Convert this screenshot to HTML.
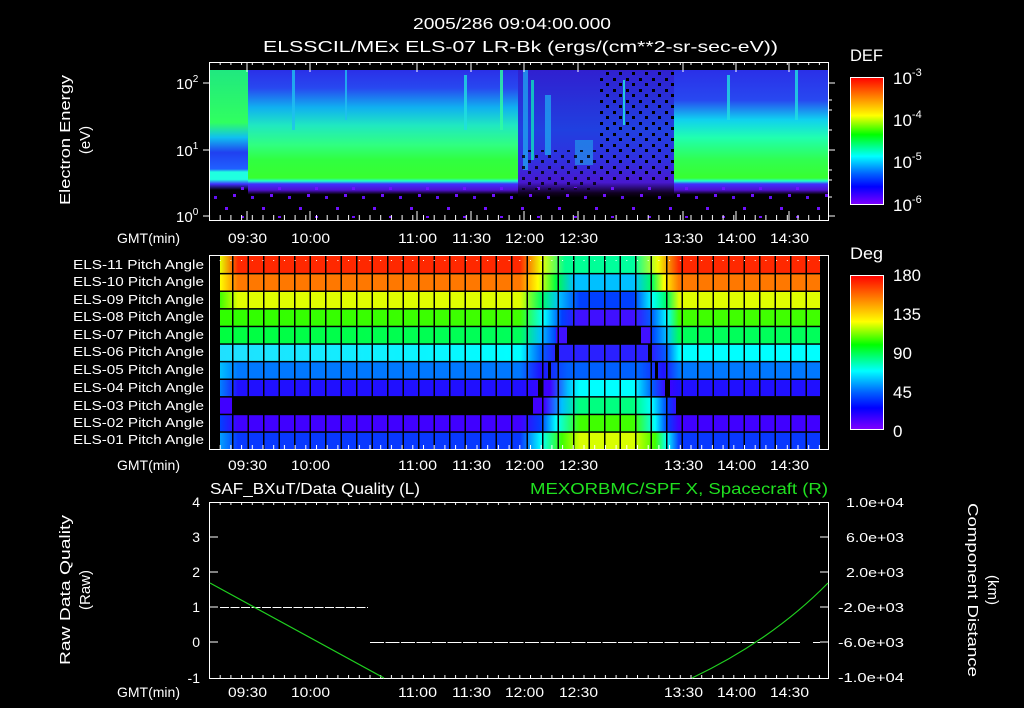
<!DOCTYPE html>
<html><head><meta charset="utf-8"><style>
html,body{margin:0;padding:0;background:#000;}
svg{display:block}
text{font-family:"Liberation Sans",sans-serif;fill:#fff}
</style></head><body>
<svg width="1024" height="708" viewBox="0 0 1024 708" xmlns="http://www.w3.org/2000/svg">
<defs>
<linearGradient id="cb" x1="0" y1="0" x2="0" y2="1">
<stop offset="0" stop-color="#ff0000"/><stop offset="0.15" stop-color="#ff8000"/><stop offset="0.3" stop-color="#ffff00"/><stop offset="0.45" stop-color="#00ff00"/><stop offset="0.62" stop-color="#00ffff"/><stop offset="0.76" stop-color="#0060ff"/><stop offset="0.86" stop-color="#0000ff"/><stop offset="1" stop-color="#8000ff"/>
</linearGradient>
<linearGradient id="specL" gradientUnits="userSpaceOnUse" x1="0" y1="70" x2="0" y2="220">
<stop offset="0" stop-color="#2a30e8"/><stop offset="0.12" stop-color="#2848f0"/><stop offset="0.25" stop-color="#10b0f0"/><stop offset="0.37" stop-color="#20e8c0"/><stop offset="0.5" stop-color="#30ff80"/><stop offset="0.6" stop-color="#30ff40"/><stop offset="0.72" stop-color="#38ff30"/><stop offset="0.74" stop-color="#20ffd0"/><stop offset="0.76" stop-color="#4030ff"/><stop offset="0.8" stop-color="#5010d0"/><stop offset="0.83" stop-color="#000"/><stop offset="1" stop-color="#000"/>
</linearGradient>
<linearGradient id="specR" gradientUnits="userSpaceOnUse" x1="0" y1="70" x2="0" y2="220">
<stop offset="0" stop-color="#2a30e8"/><stop offset="0.2" stop-color="#2848f0"/><stop offset="0.33" stop-color="#10d0f0"/><stop offset="0.45" stop-color="#20ffb0"/><stop offset="0.6" stop-color="#30ff50"/><stop offset="0.72" stop-color="#38ff30"/><stop offset="0.74" stop-color="#20ffd0"/><stop offset="0.76" stop-color="#4030ff"/><stop offset="0.8" stop-color="#5010d0"/><stop offset="0.83" stop-color="#000"/><stop offset="1" stop-color="#000"/>
</linearGradient>
<linearGradient id="specM" gradientUnits="userSpaceOnUse" x1="0" y1="70" x2="0" y2="220">
<stop offset="0" stop-color="#3020d0"/><stop offset="0.4" stop-color="#2040e0"/><stop offset="0.6" stop-color="#3030e0"/><stop offset="0.75" stop-color="#4818d0"/><stop offset="0.82" stop-color="#100020"/><stop offset="0.85" stop-color="#000"/><stop offset="1" stop-color="#000"/>
</linearGradient>
<linearGradient id="specE" gradientUnits="userSpaceOnUse" x1="0" y1="70" x2="0" y2="220">
<stop offset="0" stop-color="#20e880"/><stop offset="0.35" stop-color="#30ff60"/><stop offset="0.45" stop-color="#10c0f0"/><stop offset="0.55" stop-color="#2040f0"/><stop offset="0.66" stop-color="#2060ff"/><stop offset="0.68" stop-color="#20ffe0"/><stop offset="0.73" stop-color="#20ffe0"/><stop offset="0.76" stop-color="#4030ff"/><stop offset="0.8" stop-color="#000"/><stop offset="1" stop-color="#000"/>
</linearGradient>
<pattern id="tk" patternUnits="userSpaceOnUse" x="209" y="0" width="10.7" height="10"><rect x="0" y="0" width="1" height="5" fill="#fff"/></pattern>
<pattern id="tkb" patternUnits="userSpaceOnUse" x="209" y="0" width="10.7" height="10"><rect x="0" y="5" width="1" height="5" fill="#fff"/></pattern>
<pattern id="vg" patternUnits="userSpaceOnUse" x="232" y="0" width="15.5" height="10"><rect x="0" y="0" width="1.5" height="10" fill="#000"/></pattern>
<pattern id="spk" patternUnits="userSpaceOnUse" x="0" y="0" width="37" height="29">
<rect x="3" y="4" width="3" height="3" fill="#7010ff"/><rect x="19" y="13" width="3" height="3" fill="#7010ff"/><rect x="29" y="22" width="3" height="3" fill="#6010f0"/><rect x="11" y="20" width="3" height="3" fill="#7010ff"/>
</pattern>
<pattern id="blk" patternUnits="userSpaceOnUse" x="0" y="0" width="13" height="11">
<rect x="2" y="1" width="3" height="3" fill="#000"/><rect x="8" y="6" width="3" height="3" fill="#000"/>
</pattern>
<linearGradient id="r11" gradientUnits="userSpaceOnUse" x1="220" x2="820"><stop offset="0" stop-color="#e8ff00"/><stop offset="0.03" stop-color="#ff2800"/><stop offset="0.5" stop-color="#ff2800"/><stop offset="0.535" stop-color="#f0ff00"/><stop offset="0.575" stop-color="#00ff90"/><stop offset="0.69" stop-color="#00ffa0"/><stop offset="0.73" stop-color="#f0ff00"/><stop offset="0.765" stop-color="#ff2800"/><stop offset="1" stop-color="#ff2800"/></linearGradient>
<linearGradient id="r10" gradientUnits="userSpaceOnUse" x1="220" x2="820"><stop offset="0" stop-color="#ffff00"/><stop offset="0.03" stop-color="#ff7800"/><stop offset="0.5" stop-color="#ff7800"/><stop offset="0.53" stop-color="#ffff00"/><stop offset="0.56" stop-color="#00ff40"/><stop offset="0.59" stop-color="#00c0ff"/><stop offset="0.69" stop-color="#00c0ff"/><stop offset="0.72" stop-color="#00ff60"/><stop offset="0.74" stop-color="#ffff00"/><stop offset="0.765" stop-color="#ff7800"/><stop offset="1" stop-color="#ff7800"/></linearGradient>
<linearGradient id="r09" gradientUnits="userSpaceOnUse" x1="220" x2="820"><stop offset="0" stop-color="#40ff00"/><stop offset="0.03" stop-color="#e0ff00"/><stop offset="0.5" stop-color="#e0ff00"/><stop offset="0.535" stop-color="#00ff60"/><stop offset="0.565" stop-color="#00c0ff"/><stop offset="0.6" stop-color="#0040ff"/><stop offset="0.69" stop-color="#0040ff"/><stop offset="0.72" stop-color="#00ffff"/><stop offset="0.745" stop-color="#00ff60"/><stop offset="0.765" stop-color="#e0ff00"/><stop offset="1" stop-color="#e0ff00"/></linearGradient>
<linearGradient id="r08" gradientUnits="userSpaceOnUse" x1="220" x2="820"><stop offset="0" stop-color="#30ff00"/><stop offset="0.5" stop-color="#40ff00"/><stop offset="0.54" stop-color="#00ffff"/><stop offset="0.57" stop-color="#0040ff"/><stop offset="0.6" stop-color="#4010ff"/><stop offset="0.69" stop-color="#4010ff"/><stop offset="0.72" stop-color="#0060ff"/><stop offset="0.745" stop-color="#00ffff"/><stop offset="0.765" stop-color="#40ff00"/><stop offset="1" stop-color="#40ff00"/></linearGradient>
<linearGradient id="r07" gradientUnits="userSpaceOnUse" x1="220" x2="820"><stop offset="0" stop-color="#00ff40"/><stop offset="0.5" stop-color="#00ff5a"/><stop offset="0.535" stop-color="#00c0ff"/><stop offset="0.56" stop-color="#0040ff"/><stop offset="0.72" stop-color="#0040ff"/><stop offset="0.745" stop-color="#00c0ff"/><stop offset="0.765" stop-color="#00ff5a"/><stop offset="1" stop-color="#00ff5a"/></linearGradient>
<linearGradient id="r06" gradientUnits="userSpaceOnUse" x1="220" x2="820"><stop offset="0" stop-color="#20e0ff"/><stop offset="0.5" stop-color="#00ffff"/><stop offset="0.535" stop-color="#0060ff"/><stop offset="0.56" stop-color="#2a20ff"/><stop offset="0.72" stop-color="#2a20ff"/><stop offset="0.745" stop-color="#0060ff"/><stop offset="0.765" stop-color="#00ffff"/><stop offset="1" stop-color="#00ffff"/></linearGradient>
<linearGradient id="r05" gradientUnits="userSpaceOnUse" x1="220" x2="820"><stop offset="0" stop-color="#00c0ff"/><stop offset="0.03" stop-color="#0078ff"/><stop offset="0.5" stop-color="#0078ff"/><stop offset="0.535" stop-color="#2010ff"/><stop offset="0.58" stop-color="#0060ff"/><stop offset="0.7" stop-color="#0060ff"/><stop offset="0.74" stop-color="#2010ff"/><stop offset="0.765" stop-color="#0078ff"/><stop offset="1" stop-color="#0078ff"/></linearGradient>
<linearGradient id="r04" gradientUnits="userSpaceOnUse" x1="220" x2="820"><stop offset="0" stop-color="#0080ff"/><stop offset="0.03" stop-color="#2010ff"/><stop offset="0.5" stop-color="#2010ff"/><stop offset="0.55" stop-color="#4000ff"/><stop offset="0.58" stop-color="#00c0ff"/><stop offset="0.6" stop-color="#00ffff"/><stop offset="0.69" stop-color="#00ffff"/><stop offset="0.72" stop-color="#0060ff"/><stop offset="0.745" stop-color="#4000ff"/><stop offset="0.765" stop-color="#2010ff"/><stop offset="1" stop-color="#2010ff"/></linearGradient>
<linearGradient id="r03" gradientUnits="userSpaceOnUse" x1="220" x2="820"><stop offset="0" stop-color="#4000ff"/><stop offset="0.54" stop-color="#4000ff"/><stop offset="0.57" stop-color="#00c0ff"/><stop offset="0.6" stop-color="#00ff80"/><stop offset="0.69" stop-color="#00ff80"/><stop offset="0.72" stop-color="#00ffff"/><stop offset="0.745" stop-color="#0040ff"/><stop offset="0.765" stop-color="#4000ff"/><stop offset="1" stop-color="#4000ff"/></linearGradient>
<linearGradient id="r02" gradientUnits="userSpaceOnUse" x1="220" x2="820"><stop offset="0" stop-color="#0040ff"/><stop offset="0.03" stop-color="#4000ff"/><stop offset="0.5" stop-color="#4000ff"/><stop offset="0.535" stop-color="#0040ff"/><stop offset="0.56" stop-color="#00ffff"/><stop offset="0.6" stop-color="#40ff00"/><stop offset="0.69" stop-color="#40ff00"/><stop offset="0.725" stop-color="#00ffff"/><stop offset="0.745" stop-color="#0040ff"/><stop offset="0.765" stop-color="#4000ff"/><stop offset="1" stop-color="#4000ff"/></linearGradient>
<linearGradient id="r01" gradientUnits="userSpaceOnUse" x1="220" x2="820"><stop offset="0" stop-color="#00a0ff"/><stop offset="0.03" stop-color="#0838ff"/><stop offset="0.5" stop-color="#0838ff"/><stop offset="0.535" stop-color="#00ffff"/><stop offset="0.57" stop-color="#40ff00"/><stop offset="0.6" stop-color="#d8ff00"/><stop offset="0.69" stop-color="#d8ff00"/><stop offset="0.725" stop-color="#40ff00"/><stop offset="0.745" stop-color="#00ffff"/><stop offset="0.765" stop-color="#0838ff"/><stop offset="1" stop-color="#0838ff"/></linearGradient>
</defs>

<text x="413" y="29" font-size="16" textLength="198" lengthAdjust="spacingAndGlyphs">2005/286 09:04:00.000</text>
<text x="263" y="52" font-size="16" textLength="515" lengthAdjust="spacingAndGlyphs">ELSSCIL/MEx ELS-07 LR-Bk  (ergs/(cm**2-sr-sec-eV))</text>

<rect x="210" y="70" width="38" height="150" fill="url(#specE)"/>
<rect x="248" y="70" width="270" height="150" fill="url(#specL)"/>
<rect x="518" y="70" width="156" height="150" fill="url(#specM)"/>
<rect x="674" y="70" width="154" height="150" fill="url(#specR)"/>
<g opacity="0.8">
<rect x="292" y="70" width="3" height="60" fill="#20c0f0"/><rect x="345" y="70" width="2" height="50" fill="#20c0f0"/>
<rect x="464" y="75" width="3" height="55" fill="#20e0e0"/><rect x="500" y="70" width="3" height="60" fill="#30ffa0"/>
<rect x="523" y="70" width="5" height="100" fill="#20a0f0"/><rect x="531" y="80" width="3" height="80" fill="#10e0c0"/>
<rect x="545" y="95" width="6" height="60" fill="#20a0f0"/><rect x="575" y="140" width="18" height="25" fill="#20c0f0" opacity="0.6"/>
<rect x="623" y="80" width="2" height="45" fill="#20f0e0"/><rect x="727" y="75" width="3" height="45" fill="#20e0e0"/>
<rect x="795" y="70" width="3" height="50" fill="#20e0e0"/>
</g>
<rect x="600" y="70" width="75" height="110" fill="url(#blk)"/>
<rect x="210" y="186" width="618" height="32" fill="url(#spk)"/>
<rect x="520" y="150" width="80" height="40" fill="url(#blk)" opacity="0.8"/>
<rect x="209.5" y="62.5" width="619" height="158" fill="none" stroke="#fff"/>
<rect x="209" y="63" width="619" height="5" fill="url(#tk)"/>
<rect x="209" y="215" width="619" height="5" fill="url(#tkb)"/>
<g stroke="#fff"><line x1="247" y1="63" x2="247" y2="72"/><line x1="310" y1="63" x2="310" y2="72"/><line x1="417" y1="63" x2="417" y2="72"/><line x1="471" y1="63" x2="471" y2="72"/><line x1="524" y1="63" x2="524" y2="72"/><line x1="578" y1="63" x2="578" y2="72"/><line x1="683" y1="63" x2="683" y2="72"/><line x1="736" y1="63" x2="736" y2="72"/><line x1="789" y1="63" x2="789" y2="72"/>
<line x1="247" y1="211" x2="247" y2="220"/><line x1="310" y1="211" x2="310" y2="220"/><line x1="417" y1="211" x2="417" y2="220"/><line x1="471" y1="211" x2="471" y2="220"/><line x1="524" y1="211" x2="524" y2="220"/><line x1="578" y1="211" x2="578" y2="220"/><line x1="683" y1="211" x2="683" y2="220"/><line x1="736" y1="211" x2="736" y2="220"/><line x1="789" y1="211" x2="789" y2="220"/>
<line x1="203" y1="83" x2="210" y2="83"/><line x1="203" y1="150" x2="210" y2="150"/><line x1="203" y1="216" x2="210" y2="216"/>
<line x1="828" y1="83" x2="835" y2="83"/><line x1="828" y1="150" x2="835" y2="150"/><line x1="828" y1="216" x2="835" y2="216"/>
<line x1="828" y1="100" x2="832" y2="100"/><line x1="828" y1="110" x2="832" y2="110"/><line x1="828" y1="130" x2="832" y2="130"/><line x1="828" y1="170" x2="832" y2="170"/><line x1="828" y1="180" x2="832" y2="180"/><line x1="828" y1="197" x2="832" y2="197"/>
</g>
<text x="176" y="89" font-size="15">10<tspan font-size="10" dy="-7">2</tspan></text>
<text x="176" y="156" font-size="15">10<tspan font-size="10" dy="-7">1</tspan></text>
<text x="176" y="222" font-size="15">10<tspan font-size="10" dy="-7">0</tspan></text>
<text transform="translate(70,205) rotate(-90)" font-size="15" textLength="130" lengthAdjust="spacingAndGlyphs">Electron Energy</text>
<text transform="translate(90,140) rotate(-90)" font-size="15" text-anchor="middle">(eV)</text>

<text x="850" y="61" font-size="17" textLength="33" lengthAdjust="spacingAndGlyphs">DEF</text>
<rect x="850.5" y="77.5" width="33" height="127" fill="url(#cb)" stroke="#fff"/>
<text x="893" y="84" font-size="17">10<tspan font-size="11" dy="-8">-3</tspan></text>
<text x="893" y="126" font-size="17">10<tspan font-size="11" dy="-8">-4</tspan></text>
<text x="893" y="168" font-size="17">10<tspan font-size="11" dy="-8">-5</tspan></text>
<text x="893" y="211" font-size="17">10<tspan font-size="11" dy="-8">-6</tspan></text>

<g font-size="14" lengthAdjust="spacingAndGlyphs">
<text x="117" y="243" textLength="63" lengthAdjust="spacingAndGlyphs">GMT(min)</text>
<text x="117" y="470" textLength="63" lengthAdjust="spacingAndGlyphs">GMT(min)</text>
<text x="117" y="697" textLength="63" lengthAdjust="spacingAndGlyphs">GMT(min)</text>
</g>
<g font-size="14">
<text x="228" y="243" textLength="39" lengthAdjust="spacingAndGlyphs">09:30</text><text x="291" y="243" textLength="39" lengthAdjust="spacingAndGlyphs">10:00</text><text x="398" y="243" textLength="39" lengthAdjust="spacingAndGlyphs">11:00</text><text x="452" y="243" textLength="39" lengthAdjust="spacingAndGlyphs">11:30</text><text x="505" y="243" textLength="39" lengthAdjust="spacingAndGlyphs">12:00</text><text x="559" y="243" textLength="39" lengthAdjust="spacingAndGlyphs">12:30</text><text x="664" y="243" textLength="39" lengthAdjust="spacingAndGlyphs">13:30</text><text x="717" y="243" textLength="39" lengthAdjust="spacingAndGlyphs">14:00</text><text x="770" y="243" textLength="39" lengthAdjust="spacingAndGlyphs">14:30</text>
<text x="228" y="470" textLength="39" lengthAdjust="spacingAndGlyphs">09:30</text><text x="291" y="470" textLength="39" lengthAdjust="spacingAndGlyphs">10:00</text><text x="398" y="470" textLength="39" lengthAdjust="spacingAndGlyphs">11:00</text><text x="452" y="470" textLength="39" lengthAdjust="spacingAndGlyphs">11:30</text><text x="505" y="470" textLength="39" lengthAdjust="spacingAndGlyphs">12:00</text><text x="559" y="470" textLength="39" lengthAdjust="spacingAndGlyphs">12:30</text><text x="664" y="470" textLength="39" lengthAdjust="spacingAndGlyphs">13:30</text><text x="717" y="470" textLength="39" lengthAdjust="spacingAndGlyphs">14:00</text><text x="770" y="470" textLength="39" lengthAdjust="spacingAndGlyphs">14:30</text>
<text x="228" y="697" textLength="39" lengthAdjust="spacingAndGlyphs">09:30</text><text x="291" y="697" textLength="39" lengthAdjust="spacingAndGlyphs">10:00</text><text x="398" y="697" textLength="39" lengthAdjust="spacingAndGlyphs">11:00</text><text x="452" y="697" textLength="39" lengthAdjust="spacingAndGlyphs">11:30</text><text x="505" y="697" textLength="39" lengthAdjust="spacingAndGlyphs">12:00</text><text x="559" y="697" textLength="39" lengthAdjust="spacingAndGlyphs">12:30</text><text x="664" y="697" textLength="39" lengthAdjust="spacingAndGlyphs">13:30</text><text x="717" y="697" textLength="39" lengthAdjust="spacingAndGlyphs">14:00</text><text x="770" y="697" textLength="39" lengthAdjust="spacingAndGlyphs">14:30</text>
</g>

<rect x="210" y="256" width="618" height="193" fill="#000"/>
<rect x="220" y="256" width="600" height="17.6" fill="url(#r11)"/>
<rect x="220" y="273.6" width="600" height="17.6" fill="url(#r10)"/>
<rect x="220" y="291.2" width="600" height="17.6" fill="url(#r09)"/>
<rect x="220" y="308.8" width="600" height="17.6" fill="url(#r08)"/>
<rect x="220" y="326.4" width="600" height="17.6" fill="url(#r07)"/>
<rect x="567" y="326.4" width="74" height="17.6" fill="#000"/>
<rect x="556" y="326.4" width="11" height="17.6" fill="#4010ff"/><rect x="641" y="326.4" width="10" height="17.6" fill="#4010ff"/>
<rect x="220" y="344" width="600" height="17.6" fill="url(#r06)"/>
<rect x="555" y="344" width="4" height="17.6" fill="#000"/><rect x="648" y="344" width="4" height="17.6" fill="#000"/>
<rect x="220" y="361.6" width="600" height="17.6" fill="url(#r05)"/>
<rect x="548" y="361.6" width="3" height="17.6" fill="#000"/><rect x="655" y="361.6" width="3" height="17.6" fill="#000"/>
<rect x="220" y="379.2" width="600" height="17.6" fill="url(#r04)"/>
<rect x="538" y="379.2" width="5" height="17.6" fill="#000"/><rect x="665" y="379.2" width="5" height="17.6" fill="#000"/>
<rect x="220" y="396.8" width="600" height="17.6" fill="url(#r03)"/>
<rect x="232" y="396.8" width="301" height="17.6" fill="#000"/><rect x="676" y="396.8" width="144" height="17.6" fill="#000"/>
<rect x="220" y="414.4" width="600" height="17.6" fill="url(#r02)"/>
<rect x="220" y="432" width="600" height="17.6" fill="url(#r01)"/>
<rect x="220" y="256" width="600" height="193" fill="url(#vg)"/>
<g fill="#000"><rect x="220" y="272.9" width="600" height="1.5"/><rect x="220" y="290.5" width="600" height="1.5"/><rect x="220" y="308.1" width="600" height="1.5"/><rect x="220" y="325.7" width="600" height="1.5"/><rect x="220" y="343.3" width="600" height="1.5"/><rect x="220" y="360.9" width="600" height="1.5"/><rect x="220" y="378.5" width="600" height="1.5"/><rect x="220" y="396.1" width="600" height="1.5"/><rect x="220" y="413.7" width="600" height="1.5"/><rect x="220" y="431.3" width="600" height="1.5"/></g>
<rect x="209" y="256" width="619" height="5" fill="url(#tk)"/>
<rect x="209" y="444" width="619" height="5" fill="url(#tkb)"/>
<rect x="209.5" y="255.5" width="619" height="194" fill="none" stroke="#fff"/>
<g font-size="13">
<text x="73" y="269" textLength="131" lengthAdjust="spacingAndGlyphs">ELS-11 Pitch Angle</text><text x="73" y="286" textLength="131" lengthAdjust="spacingAndGlyphs">ELS-10 Pitch Angle</text><text x="73" y="304" textLength="131" lengthAdjust="spacingAndGlyphs">ELS-09 Pitch Angle</text><text x="73" y="321" textLength="131" lengthAdjust="spacingAndGlyphs">ELS-08 Pitch Angle</text><text x="73" y="339" textLength="131" lengthAdjust="spacingAndGlyphs">ELS-07 Pitch Angle</text><text x="73" y="356" textLength="131" lengthAdjust="spacingAndGlyphs">ELS-06 Pitch Angle</text><text x="73" y="374" textLength="131" lengthAdjust="spacingAndGlyphs">ELS-05 Pitch Angle</text><text x="73" y="392" textLength="131" lengthAdjust="spacingAndGlyphs">ELS-04 Pitch Angle</text><text x="73" y="410" textLength="131" lengthAdjust="spacingAndGlyphs">ELS-03 Pitch Angle</text><text x="73" y="427" textLength="131" lengthAdjust="spacingAndGlyphs">ELS-02 Pitch Angle</text><text x="73" y="444" textLength="131" lengthAdjust="spacingAndGlyphs">ELS-01 Pitch Angle</text>
</g>
<text x="850" y="259" font-size="17" textLength="33" lengthAdjust="spacingAndGlyphs">Deg</text>
<rect x="850.5" y="275.5" width="33" height="154" fill="url(#cb)" stroke="#fff"/>
<g font-size="17"><text x="893" y="281" textLength="28" lengthAdjust="spacingAndGlyphs">180</text><text x="893" y="320" textLength="28" lengthAdjust="spacingAndGlyphs">135</text><text x="893" y="359">90</text><text x="893" y="398">45</text><text x="893" y="437">0</text></g>

<text x="210" y="494" font-size="16" textLength="210" lengthAdjust="spacingAndGlyphs">SAF_BXuT/Data Quality (L)</text>
<text x="530" y="494" font-size="16" textLength="298" lengthAdjust="spacingAndGlyphs" style="fill:#20e020">MEXORBMC/SPF X, Spacecraft (R)</text>
<rect x="209.5" y="502.5" width="619" height="176" fill="none" stroke="#fff"/>
<rect x="209" y="503" width="619" height="5" fill="url(#tk)"/>
<rect x="209" y="673" width="619" height="5" fill="url(#tkb)"/>
<g stroke="#fff">
<line x1="210" y1="537" x2="218" y2="537"/><line x1="210" y1="572" x2="218" y2="572"/><line x1="210" y1="607" x2="218" y2="607"/><line x1="210" y1="642" x2="218" y2="642"/>
<line x1="820" y1="537" x2="828" y2="537"/><line x1="820" y1="572" x2="828" y2="572"/><line x1="820" y1="607" x2="828" y2="607"/><line x1="820" y1="642" x2="828" y2="642"/>
<line x1="220" y1="607.5" x2="368" y2="607.5" stroke-dasharray="9,1.5"/>
<line x1="370" y1="642.5" x2="800" y2="642.5" stroke-dasharray="14,1.5"/>
<line x1="813" y1="642.5" x2="820" y2="642.5"/>
</g>
<path d="M210,583 Q300,632 384,678" fill="none" stroke="#20d020" stroke-width="1.2"/>
<path d="M692,678 Q772,640 828,583" fill="none" stroke="#20d020" stroke-width="1.2"/>
<g font-size="14" text-anchor="end"><text x="200" y="507">4</text><text x="200" y="542">3</text><text x="200" y="577">2</text><text x="200" y="612">1</text><text x="200" y="647">0</text><text x="200" y="683">-1</text></g>
<g font-size="13"><text x="846" y="507" textLength="58" lengthAdjust="spacingAndGlyphs">1.0e+04</text><text x="846" y="542" textLength="58" lengthAdjust="spacingAndGlyphs">6.0e+03</text><text x="846" y="577" textLength="58" lengthAdjust="spacingAndGlyphs">2.0e+03</text><text x="838" y="612" textLength="66" lengthAdjust="spacingAndGlyphs">-2.0e+03</text><text x="838" y="647" textLength="66" lengthAdjust="spacingAndGlyphs">-6.0e+03</text><text x="838" y="682" textLength="66" lengthAdjust="spacingAndGlyphs">-1.0e+04</text></g>
<text transform="translate(70,665) rotate(-90)" font-size="15" textLength="150" lengthAdjust="spacingAndGlyphs">Raw Data Quality</text>
<text transform="translate(90,590) rotate(-90)" font-size="15" text-anchor="middle">(Raw)</text>
<text transform="translate(968,503) rotate(90)" font-size="15" textLength="174" lengthAdjust="spacingAndGlyphs">Component Distance</text>
<text transform="translate(988,590) rotate(90)" font-size="15" text-anchor="middle">(km)</text>
</svg>
</body></html>
